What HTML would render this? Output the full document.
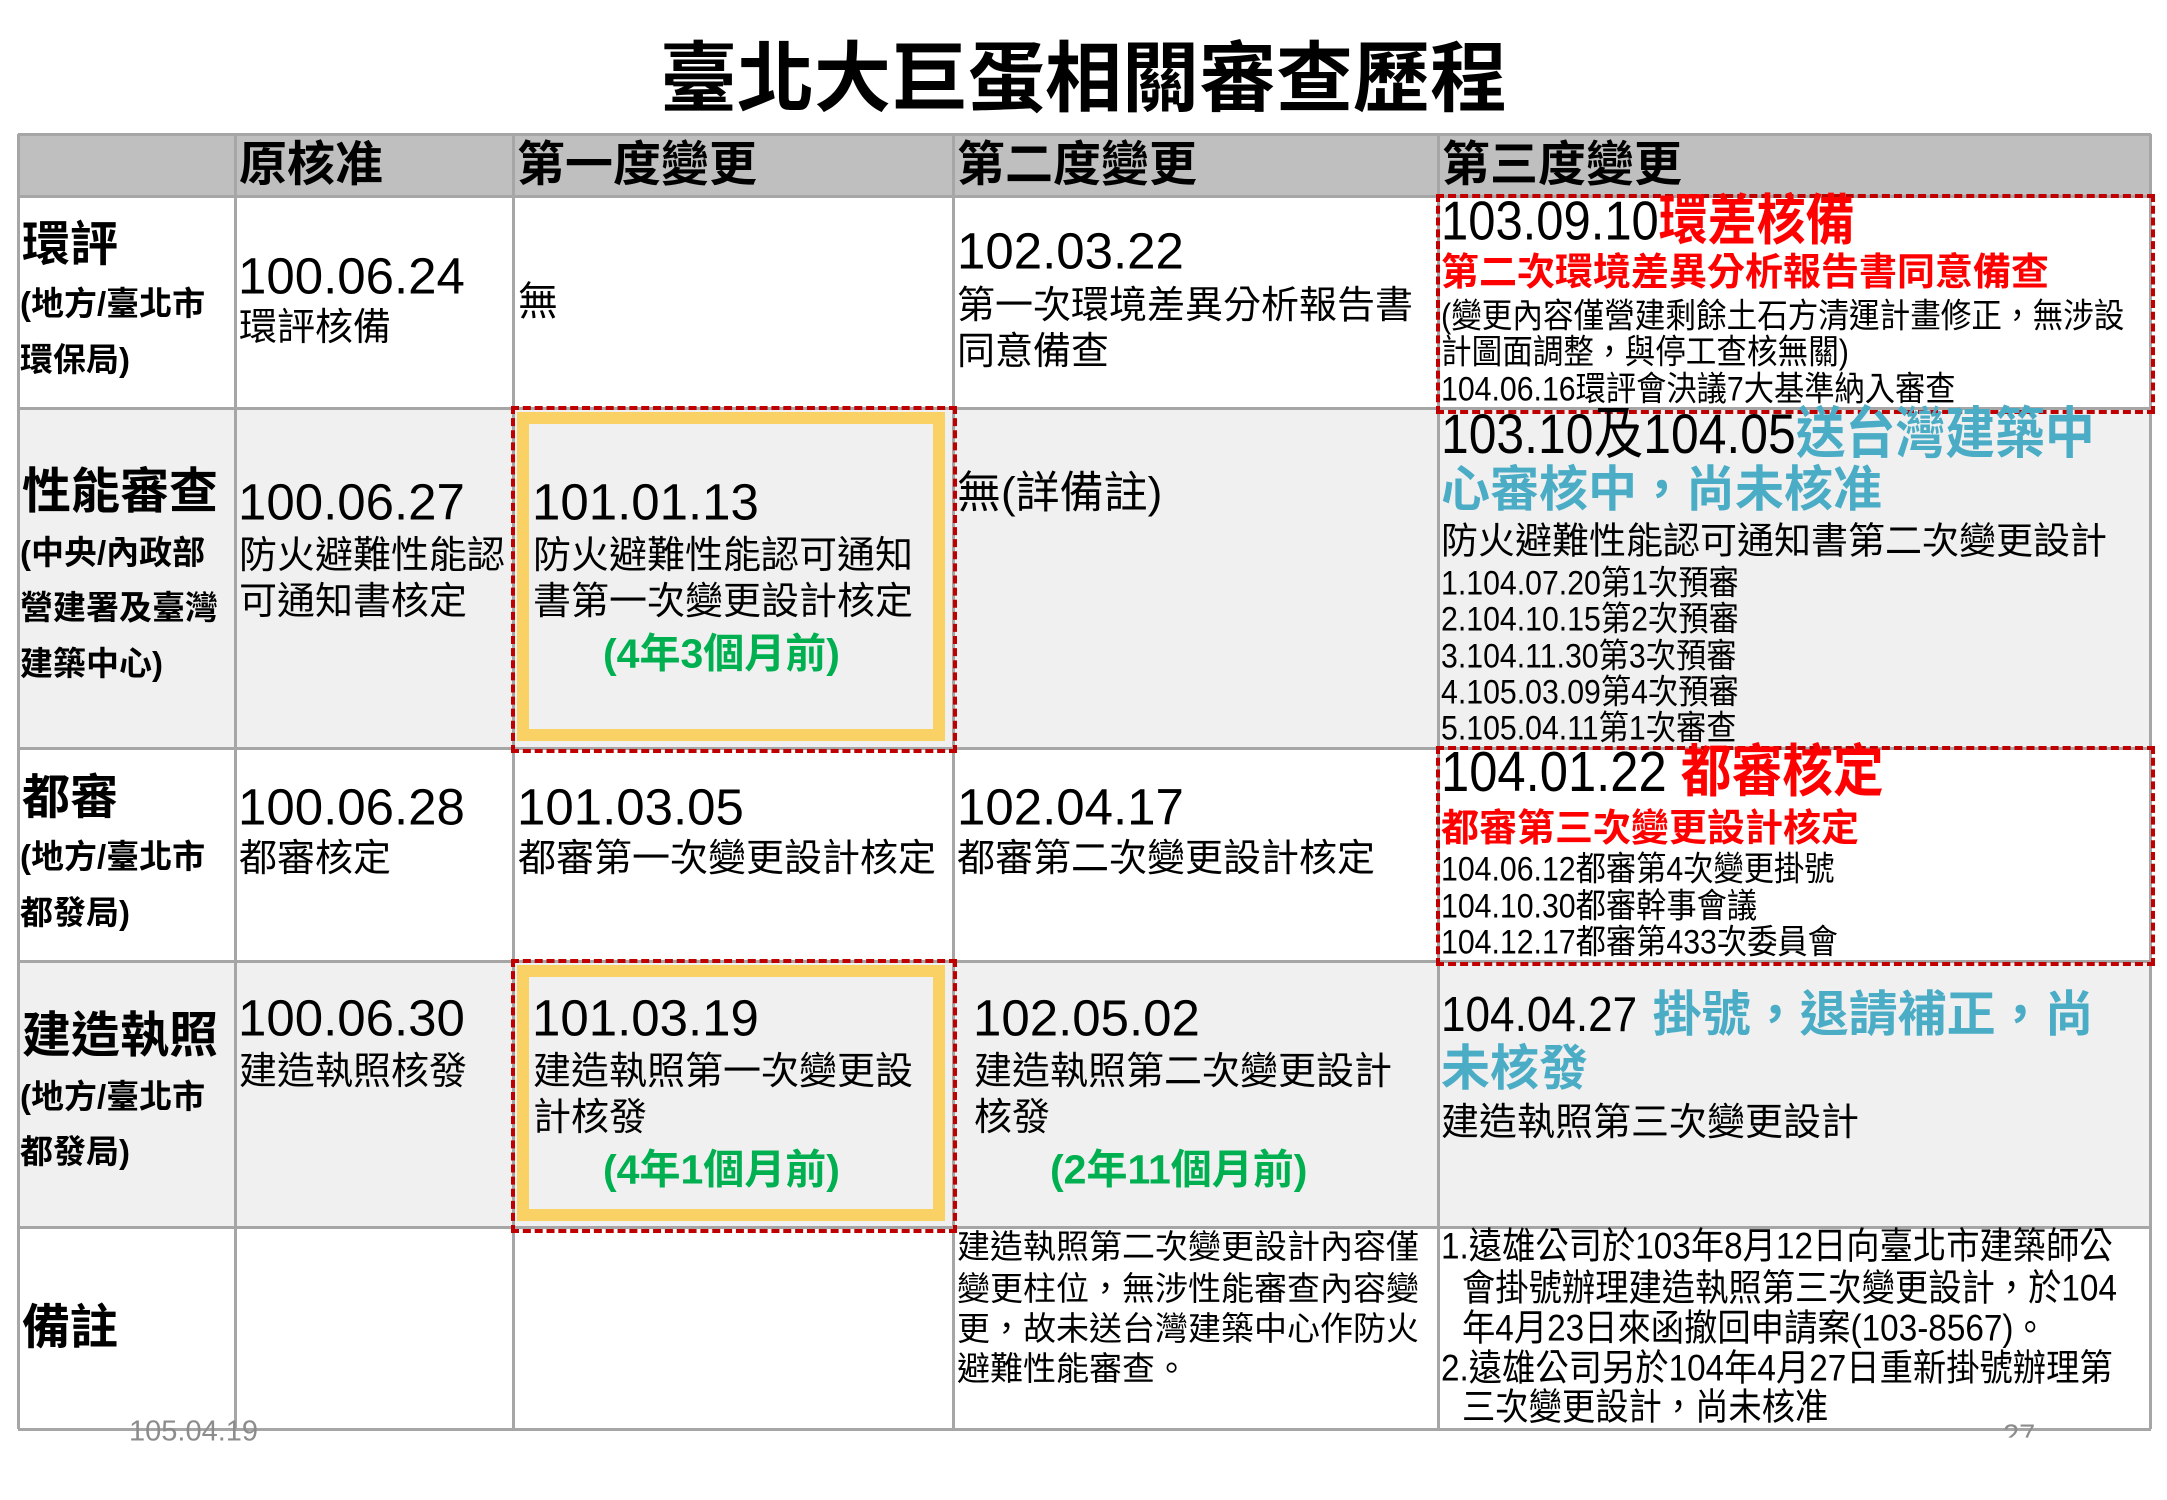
<!DOCTYPE html>
<html><head><meta charset="utf-8"><style>
body{margin:0;background:#fff;}
#p{position:relative;width:2167px;height:1500px;overflow:hidden;background:#fff;font-family:"Liberation Sans","Noto Sans CJK TC",sans-serif;color:#000;}
.a{position:absolute;white-space:nowrap;transform:translateY(-50%);line-height:1.15;}
.n{position:absolute;white-space:nowrap;transform-origin:0 50%;transform:translateY(-50%) scaleX(.89);line-height:1.15;}
.bg{position:absolute;}
.vl{position:absolute;width:3px;background:#a6a6a6;top:134px;height:1295px;}
.hl{position:absolute;height:3px;background:#a6a6a6;left:18px;width:2133px;}
.b{font-weight:bold;}
.red{color:#ff0000;font-weight:bold;}
.blu{color:#4bacc6;font-weight:bold;}
.grn{color:#00b050;font-weight:bold;}
</style></head><body><div id="p">
<div class="a b" style="left:0;width:2167px;text-align:center;top:80px;font-size:77px;">臺北大巨蛋相關審查歷程</div>

<div class="bg" style="left:18px;top:134px;width:2133px;height:62px;background:#bfbfbf"></div>
<div class="bg" style="left:18px;top:408px;width:2133px;height:340px;background:#f0f0f0"></div>
<div class="bg" style="left:18px;top:961px;width:2133px;height:266px;background:#f0f0f0"></div>

<div class="vl" style="left:17px"></div>
<div class="vl" style="left:234px"></div>
<div class="vl" style="left:512px"></div>
<div class="vl" style="left:952px"></div>
<div class="vl" style="left:1437px"></div>
<div class="vl" style="left:2149px"></div>
<div class="hl" style="top:133px"></div>
<div class="hl" style="top:195px"></div>
<div class="hl" style="top:407px"></div>
<div class="hl" style="top:747px"></div>
<div class="hl" style="top:960px"></div>
<div class="hl" style="top:1226px"></div>
<div class="hl" style="top:1428px"></div>

<!-- highlight boxes -->
<div class="bg" style="left:511px;top:406px;width:438px;height:339px;border:4px dashed #c00000;"></div>
<div class="bg" style="left:517px;top:412px;width:428px;height:329px;border:12px solid #fad165;box-sizing:border-box;"></div>
<div class="bg" style="left:511px;top:959px;width:438px;height:266px;border:4px dashed #c00000;"></div>
<div class="bg" style="left:517px;top:965px;width:428px;height:256px;border:12px solid #fad165;box-sizing:border-box;"></div>
<div class="bg" style="left:1436px;top:194px;width:711px;height:212px;border:4px dashed #c00000;"></div>
<div class="bg" style="left:1436px;top:746px;width:711px;height:212px;border:4px dashed #c00000;"></div>

<!-- header -->
<div class="a b" style="left:239px;top:165px;font-size:48px">原核准</div>
<div class="a b" style="left:517px;top:165px;font-size:48px">第一度變更</div>
<div class="a b" style="left:957px;top:165px;font-size:48px">第二度變更</div>
<div class="a b" style="left:1442px;top:165px;font-size:48px">第三度變更</div>

<!-- labels -->
<div class="a b" style="left:22px;top:245px;font-size:48px">環評</div>
<div class="a b" style="left:20px;top:304px;font-size:33px">(地方/臺北市</div>
<div class="a b" style="left:20px;top:360px;font-size:33px">環保局)</div>
<div class="a b" style="left:22px;top:492px;font-size:49px">性能審查</div>
<div class="a b" style="left:20px;top:553px;font-size:33px">(中央/內政部</div>
<div class="a b" style="left:20px;top:608px;font-size:33px">營建署及臺灣</div>
<div class="a b" style="left:20px;top:664px;font-size:33px">建築中心)</div>
<div class="a b" style="left:22px;top:798px;font-size:48px">都審</div>
<div class="a b" style="left:20px;top:857px;font-size:33px">(地方/臺北市</div>
<div class="a b" style="left:20px;top:913px;font-size:33px">都發局)</div>
<div class="a b" style="left:22px;top:1036px;font-size:49px">建造執照</div>
<div class="a b" style="left:20px;top:1097px;font-size:33px">(地方/臺北市</div>
<div class="a b" style="left:20px;top:1152px;font-size:33px">都發局)</div>
<div class="a b" style="left:22px;top:1328px;font-size:48px">備註</div>

<!-- row1 -->
<div class="a" style="left:238px;top:277px;font-size:51px">100.06.24</div>
<div class="a" style="left:239px;top:329px;font-size:38px">環評核備</div>
<div class="a" style="left:518px;top:302px;font-size:40px">無</div>
<div class="a" style="left:957px;top:252px;font-size:51px">102.03.22</div>
<div class="a" style="left:957px;top:307px;font-size:38px">第一次環境差異分析報告書</div>
<div class="a" style="left:957px;top:353px;font-size:38px">同意備查</div>
<div class="n" style="left:1441px;top:221px;font-size:55px">103.09.10<span class="red">環差核備</span></div>
<div class="a red" style="left:1441px;top:274px;font-size:38px">第二次環境差異分析報告書同意備查</div>
<div class="n" style="left:1441px;top:317px;font-size:34px;transform:translateY(-50%) scaleX(.9)">(變更內容僅營建剩餘土石方清運計畫修正，無涉設</div>
<div class="n" style="left:1441px;top:353px;font-size:34px;transform:translateY(-50%) scaleX(.9)">計圖面調整，與停工查核無關)</div>
<div class="n" style="left:1441px;top:390px;font-size:34px">104.06.16環評會決議7大基準納入審查</div>

<!-- row2 -->
<div class="a" style="left:238px;top:503px;font-size:51px">100.06.27</div>
<div class="a" style="left:239px;top:557px;font-size:38px">防火避難性能認</div>
<div class="a" style="left:239px;top:603px;font-size:38px">可通知書核定</div>
<div class="a" style="left:532px;top:503px;font-size:51px">101.01.13</div>
<div class="a" style="left:533px;top:557px;font-size:38px">防火避難性能認可通知</div>
<div class="a" style="left:533px;top:603px;font-size:38px">書第一次變更設計核定</div>
<div class="a grn" style="left:603px;top:654px;font-size:41px">(4年3個月前)</div>
<div class="a" style="left:957px;top:494px;font-size:44px">無(詳備註)</div>
<div class="n" style="left:1441px;top:434px;font-size:56px">103.10及104.05<span class="blu">送台灣建築中</span></div>
<div class="a blu" style="left:1441px;top:490px;font-size:49px">心審核中，尚未核准</div>
<div class="a" style="left:1441px;top:542px;font-size:37px">防火避難性能認可通知書第二次變更設計</div>
<div class="n" style="left:1441px;top:584px;font-size:34px">1.104.07.20第1次預審</div>
<div class="n" style="left:1441px;top:620px;font-size:34px">2.104.10.15第2次預審</div>
<div class="n" style="left:1441px;top:657px;font-size:34px">3.104.11.30第3次預審</div>
<div class="n" style="left:1441px;top:693px;font-size:34px">4.105.03.09第4次預審</div>
<div class="n" style="left:1441px;top:729px;font-size:34px">5.105.04.11第1次審查</div>

<!-- row3 -->
<div class="a" style="left:238px;top:808px;font-size:51px">100.06.28</div>
<div class="a" style="left:239px;top:860px;font-size:38px">都審核定</div>
<div class="a" style="left:517px;top:808px;font-size:51px">101.03.05</div>
<div class="a" style="left:518px;top:860px;font-size:38px">都審第一次變更設計核定</div>
<div class="a" style="left:957px;top:808px;font-size:51px">102.04.17</div>
<div class="a" style="left:957px;top:860px;font-size:38px">都審第二次變更設計核定</div>
<div class="n" style="left:1441px;top:773px;font-size:57px">104.01.22 <span class="red">都審核定</span></div>
<div class="a red" style="left:1441px;top:830px;font-size:38px">都審第三次變更設計核定</div>
<div class="n" style="left:1441px;top:870px;font-size:34px">104.06.12都審第4次變更掛號</div>
<div class="n" style="left:1441px;top:907px;font-size:34px">104.10.30都審幹事會議</div>
<div class="n" style="left:1441px;top:943px;font-size:34px">104.12.17都審第433次委員會</div>

<!-- row4 -->
<div class="a" style="left:238px;top:1019px;font-size:51px">100.06.30</div>
<div class="a" style="left:239px;top:1073px;font-size:38px">建造執照核發</div>
<div class="a" style="left:532px;top:1019px;font-size:51px">101.03.19</div>
<div class="a" style="left:533px;top:1073px;font-size:38px">建造執照第一次變更設</div>
<div class="a" style="left:533px;top:1119px;font-size:38px">計核發</div>
<div class="a grn" style="left:603px;top:1170px;font-size:41px">(4年1個月前)</div>
<div class="a" style="left:973px;top:1019px;font-size:51px">102.05.02</div>
<div class="a" style="left:974px;top:1073px;font-size:38px">建造執照第二次變更設計</div>
<div class="a" style="left:974px;top:1119px;font-size:38px">核發</div>
<div class="a grn" style="left:1050px;top:1170px;font-size:41px">(2年11個月前)</div>
<div class="a" style="left:1441px;top:1015px;font-size:49px"><span style="display:inline-block;transform:scaleX(.9);transform-origin:0 50%;margin-right:-20px">104.04.27</span> <span class="blu">掛號，退請補正，尚</span></div>
<div class="a blu" style="left:1441px;top:1069px;font-size:49px">未核發</div>
<div class="a" style="left:1441px;top:1124px;font-size:38px">建造執照第三次變更設計</div>

<!-- row5 -->
<div class="a" style="left:957px;top:1247px;font-size:33px">建造執照第二次變更設計內容僅</div>
<div class="a" style="left:957px;top:1289px;font-size:33px">變更柱位，無涉性能審查內容變</div>
<div class="a" style="left:957px;top:1329px;font-size:33px">更，故未送台灣建築中心作防火</div>
<div class="a" style="left:957px;top:1369px;font-size:33px">避難性能審查。</div>
<div class="n" style="left:1441px;top:1247px;font-size:37px;transform:translateY(-50%) scaleX(.9)">1.遠雄公司於103年8月12日向臺北市建築師公</div>
<div class="n" style="left:1462px;top:1289px;font-size:37px;transform:translateY(-50%) scaleX(.9)">會掛號辦理建造執照第三次變更設計，於104</div>
<div class="n" style="left:1462px;top:1329px;font-size:37px;transform:translateY(-50%) scaleX(.9)">年4月23日來函撤回申請案(103-8567)。</div>
<div class="n" style="left:1441px;top:1369px;font-size:37px;transform:translateY(-50%) scaleX(.9)">2.遠雄公司另於104年4月27日重新掛號辦理第</div>
<div class="n" style="left:1462px;top:1408px;font-size:37px;transform:translateY(-50%) scaleX(.9)">三次變更設計，尚未核准</div>

<div class="a" style="left:129px;top:1432px;font-size:29px;color:#8c8c8c">105.04.19</div>
<div class="a" style="left:2003px;top:1436px;font-size:29px;color:#8c8c8c;clip-path:inset(0 0 45% 0)">27</div>
</div></body></html>
